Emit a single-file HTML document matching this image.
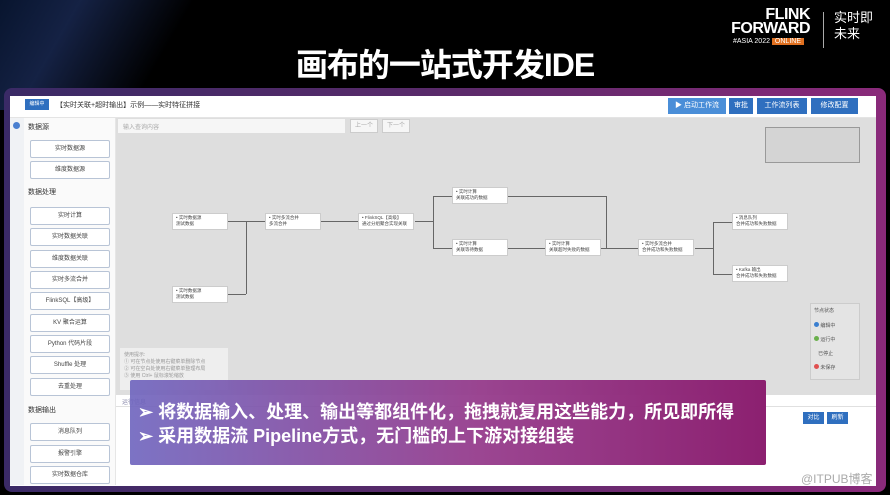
<!DOCTYPE html>
<html><head><meta charset="utf-8"><style>
*{margin:0;padding:0;box-sizing:border-box}
body{width:890px;height:495px;overflow:hidden;background:#000;position:relative;font-family:"Liberation Sans","Noto Sans CJK SC",sans-serif}
.abs{position:absolute}
.title{left:0;width:890px;top:40px;text-align:center;color:#fff;font-size:32px;font-weight:bold;letter-spacing:-1px}
.frame{left:4px;top:88px;width:882px;height:404px;border-radius:8px;background:linear-gradient(90deg,#3a2a66,#5a2a6a 50%,#8a2a7a);}
.app{left:10px;top:96px;width:866px;height:390px;background:#fff}
.btn{position:absolute;top:98px;height:16px;background:#2f6fbf;color:#fff;font-size:7px;line-height:16px;text-align:center}
.sb{position:absolute;left:30px;width:80px;height:18px;border:1px solid #b8c4d6;border-radius:2px;background:#fff;font-size:6px;color:#444;text-align:center;line-height:16px}
.sh{position:absolute;left:28px;font-size:7px;color:#333}
.node{position:absolute;width:56px;height:17px;background:#fff;border:1px solid #ccc;font-size:4.5px;color:#444;padding:1px 3px;line-height:6px}
.ln{position:absolute;background:#666}
</style></head><body>
<div class="abs" style="left:0;top:0;width:260px;height:110px;background:linear-gradient(120deg,#0a1a3a 0%,#1a2a55 25%,#000 60%);opacity:.8"></div>
<div class="abs title">画布的一站式开发IDE</div>
<div class="abs" style="left:722px;top:8px;color:#fff;font-weight:bold;font-size:16px;line-height:14px;text-align:right;width:88px;letter-spacing:-0.5px">FLINK<br>FORWARD</div>
<div class="abs" style="left:733px;top:38px;color:#fff;font-size:7px">#ASIA 2022 <span style="background:#e07020;padding:0 3px">ONLINE</span></div>
<div class="abs" style="left:823px;top:12px;width:1px;height:36px;background:#aaa"></div>
<div class="abs" style="left:834px;top:10px;color:#fff;font-size:13px;line-height:16px">实时即<br>未来</div>
<div class="abs frame"></div>
<div class="abs app"></div>
<div class="abs" style="left:25px;top:99px;width:24px;height:11px;background:#2f6fbf;color:#fff;font-size:5px;text-align:center;line-height:11px">编辑中</div>
<div class="abs" style="left:56px;top:100px;font-size:7px;color:#333">【实时关联+超时输出】示例——实时特征拼接</div>
<div class="btn" style="left:668px;width:58px;background:#4a8ed8">▶ 启动工作流</div>
<div class="btn" style="left:729px;width:24px">审批</div>
<div class="btn" style="left:757px;width:50px">工作流列表</div>
<div class="btn" style="left:811px;width:47px">修改配置</div>
<div class="abs" style="left:10px;top:117px;width:866px;height:1px;background:#e4e4e4"></div>
<div class="abs" style="left:10px;top:118px;width:14px;height:367px;background:#f0f2f5"></div>
<div class="abs" style="left:13px;top:122px;width:7px;height:7px;border-radius:50%;background:#4a7fd0"></div>
<div class="abs" style="left:24px;top:118px;width:92px;height:367px;background:#fafafa;border-right:1px solid #e6e6e6"></div>
<div class="abs" style="left:116px;top:118px;width:760px;height:277px;background:#dedede"></div>
<div class="abs" style="left:118px;top:119px;width:227px;height:14px;background:#f6f6f6;font-size:6px;color:#aaa;padding:3px 5px">输入查询内容</div>
<div class="abs" style="left:350px;top:119px;width:28px;height:14px;border:1px solid #ccc;background:#f6f6f6;font-size:6px;color:#aaa;text-align:center;line-height:12px">上一个</div>
<div class="abs" style="left:382px;top:119px;width:28px;height:14px;border:1px solid #ccc;background:#f6f6f6;font-size:6px;color:#aaa;text-align:center;line-height:12px">下一个</div>
<div class="sh" style="top:122px">数据源</div>
<div class="sb" style="top:140px">实时数据源</div>
<div class="sb" style="top:161px">维度数据源</div>
<div class="sh" style="top:187px">数据处理</div>
<div class="sb" style="top:207px">实时计算</div>
<div class="sb" style="top:228px">实时数据关联</div>
<div class="sb" style="top:250px">维度数据关联</div>
<div class="sb" style="top:271px">实时多流合并</div>
<div class="sb" style="top:292px">FlinkSQL【高级】</div>
<div class="sb" style="top:314px">KV 聚合运算</div>
<div class="sb" style="top:335px">Python 代码片段</div>
<div class="sb" style="top:356px">Shuffle 处理</div>
<div class="sb" style="top:378px">去重处理</div>
<div class="sh" style="top:405px">数据输出</div>
<div class="sb" style="top:423px">消息队列</div>
<div class="sb" style="top:445px">报警引擎</div>
<div class="sb" style="top:466px">实时数据仓库</div>
<div class="abs" style="left:765px;top:127px;width:95px;height:36px;border:1px solid #999;background:#d4d4d4"></div>
<div class="ln" style="left:228px;top:221px;width:37px;height:1px"></div>
<div class="ln" style="left:246px;top:221px;width:1px;height:73px"></div>
<div class="ln" style="left:228px;top:294px;width:18px;height:1px"></div>
<div class="ln" style="left:321px;top:221px;width:37px;height:1px"></div>
<div class="ln" style="left:415px;top:221px;width:18px;height:1px"></div>
<div class="ln" style="left:433px;top:196px;width:1px;height:52px"></div>
<div class="ln" style="left:433px;top:196px;width:19px;height:1px"></div>
<div class="ln" style="left:433px;top:248px;width:19px;height:1px"></div>
<div class="ln" style="left:508px;top:196px;width:98px;height:1px"></div>
<div class="ln" style="left:606px;top:196px;width:1px;height:52px"></div>
<div class="ln" style="left:508px;top:248px;width:37px;height:1px"></div>
<div class="ln" style="left:601px;top:248px;width:37px;height:1px"></div>
<div class="ln" style="left:695px;top:248px;width:18px;height:1px"></div>
<div class="ln" style="left:713px;top:222px;width:1px;height:52px"></div>
<div class="ln" style="left:713px;top:222px;width:19px;height:1px"></div>
<div class="ln" style="left:713px;top:274px;width:19px;height:1px"></div>
<div class="node" style="left:172px;top:213px">• 实时数据源<br>测试数据</div>
<div class="node" style="left:265px;top:213px">• 实时多流合并<br>多流合并</div>
<div class="node" style="left:358px;top:213px">• FlinkSQL【高级】<br>通过分组聚合实现关联</div>
<div class="node" style="left:452px;top:187px">• 实时计算<br>关联成功的数据</div>
<div class="node" style="left:452px;top:239px">• 实时计算<br>关联等待数据</div>
<div class="node" style="left:545px;top:239px">• 实时计算<br>关联超时失败的数据</div>
<div class="node" style="left:638px;top:239px">• 实时多流合并<br>合并成功和失败数据</div>
<div class="node" style="left:732px;top:213px">• 消息队列<br>合并成功和失败数据</div>
<div class="node" style="left:732px;top:265px">• Kafka 输出<br>合并成功和失败数据</div>
<div class="node" style="left:172px;top:286px">• 实时数据源<br>测试数据</div>
<div class="abs" style="left:810px;top:303px;width:50px;height:77px;border:1px solid #ccc;background:#e4e4e4;font-size:5px;color:#555;padding:3px">节点状态
<div style="margin-top:5px;line-height:14px">
<div><span style="display:inline-block;width:5px;height:5px;border-radius:50%;background:#3a7fd0"></span> 编辑中</div>
<div><span style="display:inline-block;width:5px;height:5px;border-radius:50%;background:#6ab04c"></span> 运行中</div>
<div>&nbsp;&nbsp;&nbsp;已停止</div>
<div><span style="display:inline-block;width:5px;height:5px;border-radius:50%;background:#e05050"></span> 未保存</div></div></div>
<div class="abs" style="left:120px;top:348px;width:108px;height:42px;background:#eee;font-size:5px;color:#999;padding:4px;line-height:7px">使用提示:<br>① 可在节点处使用右键菜单删除节点<br>② 可在空白处使用右键菜单整理布局<br>③ 使用 Ctrl+ 鼠标滚轮缩放</div>
<div class="abs" style="left:116px;top:395px;width:760px;height:12px;border-bottom:1px solid #e0e0e0;font-size:6px;color:#88a;padding:2px 6px">运行信息</div>
<div class="abs" style="left:803px;top:412px;width:21px;height:12px;background:#2f6fbf;color:#fff;font-size:6px;text-align:center;line-height:12px">对比</div>
<div class="abs" style="left:827px;top:412px;width:21px;height:12px;background:#2f6fbf;color:#fff;font-size:6px;text-align:center;line-height:12px">刷新</div>
<div class="abs" style="left:130px;top:380px;width:636px;height:85px;border-radius:2px;background:linear-gradient(90deg,rgba(110,100,190,.9),rgba(150,60,140,.95) 55%,#8c2070);"></div>
<div class="abs" style="left:138px;top:400px;color:#fff;font-size:18px;font-weight:bold;line-height:24px;white-space:nowrap">➢ 将数据输入、处理、输出等都组件化，拖拽就复用这些能力，所见即所得<br>➢ 采用数据流 Pipeline方式，无门槛的上下游对接组装</div>
<div class="abs" style="left:801px;top:470px;color:#aaa;font-size:12px">@ITPUB博客</div>
</body></html>
